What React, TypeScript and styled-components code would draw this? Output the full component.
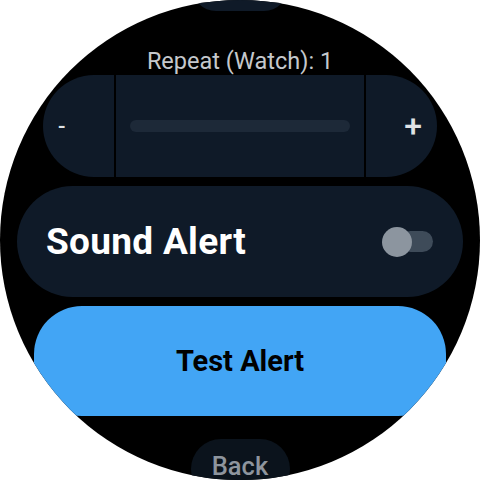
import React from "react";
import styled, { createGlobalStyle } from "styled-components";

const GlobalStyle = createGlobalStyle`
  html, body { margin: 0; padding: 0; background: #ffffff; }
  body { font-family: Roboto, "Noto Sans", sans-serif; }
`;

const Screen = styled.div`
  width: 480px;
  height: 480px;
  border-radius: 50%;
  overflow: hidden;
  background: #000000;
  display: flex;
  flex-direction: column;
  align-items: center;
`;

const TopChip = styled.div`
  flex: none;
  width: 96px;
  height: 50px;
  margin-top: -39px;
  border-radius: 24px;
  background: #0f1a28;
`;

const Label = styled.div`
  margin-top: 36px;
  font-size: 23.5px;
  line-height: 28px;
  color: #c5c8cc;
  text-align: center;
`;

const Stepper = styled.div`
  flex: none;
  width: 394px;
  height: 102px;
  border-radius: 51px;
  overflow: hidden;
  display: grid;
  grid-template-columns: 71px 1fr 71px;
  column-gap: 2px;
`;

const StepButton = styled.div<{ $side: "left" | "right" }>`
  background: #0f1a28;
  display: flex;
  align-items: center;
  justify-content: ${(p) => (p.$side === "left" ? "flex-start" : "flex-end")};
  padding: ${(p) => (p.$side === "left" ? "0 0 0 15px" : "0 15px 0 0")};
  color: #dfe2e6;
  font-size: ${(p) => (p.$side === "left" ? "22px" : "32px")};
  font-weight: 500;
`;

const StepMiddle = styled.div`
  background: #0f1a28;
  display: flex;
  align-items: center;
  padding: 0 14px;
`;

const Track = styled.div`
  flex: 1;
  height: 12px;
  border-radius: 6px;
  background: #1d2938;
`;

const SoundCard = styled.div`
  flex: none;
  box-sizing: border-box;
  margin-top: 9px;
  width: 446px;
  height: 111px;
  border-radius: 56px;
  background: #0f1a28;
  display: flex;
  align-items: center;
  justify-content: space-between;
  padding: 0 30px 0 29px;
`;

const CardTitle = styled.div`
  font-size: 37px;
  font-weight: 700;
  color: #ffffff;
  letter-spacing: 0.3px;
`;

const Toggle = styled.div`
  position: relative;
  width: 51px;
  height: 30px;
`;

const ToggleTrack = styled.div`
  position: absolute;
  right: 0;
  top: 4.5px;
  width: 33px;
  height: 21px;
  border-radius: 10.5px;
  background: #3e4b59;
`;

const ToggleThumb = styled.div`
  position: absolute;
  left: 0;
  top: 0;
  width: 30px;
  height: 30px;
  border-radius: 50%;
  background: #8c959f;
`;

const TestButton = styled.div`
  flex: none;
  margin-top: 9px;
  width: 412px;
  height: 110px;
  border-radius: 48px;
  background: #42a5f5;
  display: flex;
  align-items: center;
  justify-content: center;
  font-size: 29px;
  font-weight: 700;
  color: #000000;
`;

const BackPill = styled.div`
  flex: none;
  box-sizing: border-box;
  margin-top: 23px;
  width: 99px;
  height: 60px;
  border-radius: 30px;
  background: #0b131c;
  padding-top: 12px;
  text-align: center;
  font-size: 25.5px;
  font-weight: 500;
  color: #8e959e;
`;

export default function App() {
  return (
    <>
      <GlobalStyle />
      <Screen>
        <TopChip />
        <Label>Repeat (Watch): 1</Label>
        <Stepper>
          <StepButton $side="left">-</StepButton>
          <StepMiddle>
            <Track />
          </StepMiddle>
          <StepButton $side="right">+</StepButton>
        </Stepper>
        <SoundCard>
          <CardTitle>Sound Alert</CardTitle>
          <Toggle>
            <ToggleTrack />
            <ToggleThumb />
          </Toggle>
        </SoundCard>
        <TestButton>Test Alert</TestButton>
        <BackPill>Back</BackPill>
      </Screen>
    </>
  );
}
